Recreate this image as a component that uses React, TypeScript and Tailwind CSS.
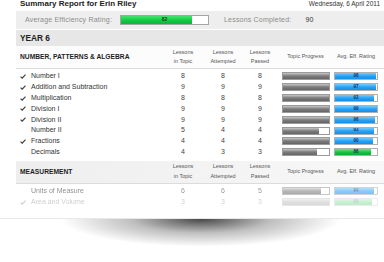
import React from "react";

type Row = {
  name: string;
  done: boolean;
  topic: number;
  attempted: number;
  passed: number;
  progress: number;
  rating: number;
  green?: boolean;
};

const algebra: Row[] = [
  { name: "Number I", done: true, topic: 8, attempted: 8, passed: 8, progress: 100, rating: 98 },
  { name: "Addition and Subtraction", done: true, topic: 9, attempted: 9, passed: 9, progress: 100, rating: 97 },
  { name: "Multiplication", done: true, topic: 8, attempted: 8, passed: 8, progress: 100, rating: 93 },
  { name: "Division I", done: true, topic: 9, attempted: 9, passed: 9, progress: 100, rating: 99 },
  { name: "Division II", done: true, topic: 9, attempted: 9, passed: 9, progress: 100, rating: 96 },
  { name: "Number II", done: false, topic: 5, attempted: 4, passed: 4, progress: 80, rating: 93 },
  { name: "Fractions", done: true, topic: 4, attempted: 4, passed: 4, progress: 100, rating: 90 },
  { name: "Decimals", done: false, topic: 4, attempted: 3, passed: 3, progress: 75, rating: 86, green: true },
];

const measurement: Row[] = [
  { name: "Units of Measure", done: false, topic: 6, attempted: 6, passed: 5, progress: 83, rating: 94 },
  { name: "Area and Volume", done: true, topic: 3, attempted: 3, passed: 3, progress: 100, rating: 89, green: true },
];

function Check() {
  return (
    <svg width="6" height="5" viewBox="0 0 6 5" className="shrink-0">
      <path d="M0.6 2.6 L2.2 4.2 L5.5 0.6" fill="none" stroke="#444" strokeWidth="1.2" />
    </svg>
  );
}

function ProgressBar({ pct }: { pct: number }) {
  return (
    <div className="w-[48px] h-[8px] border border-[#9a9a9a] bg-white overflow-hidden">
      <div
        className="h-full bg-gradient-to-b from-[#c8c8c8] via-[#7c7c7c] to-[#666666]"
        style={{ width: `${pct}%` }}
      />
    </div>
  );
}

function RatingBar({ value, green }: { value: number; green?: boolean }) {
  return (
    <div className="relative w-[44px] h-[8px] border border-[#b0b0b0] bg-white overflow-hidden">
      <div
        className={
          green
            ? "h-full bg-gradient-to-b from-[#5fe78a] via-[#12c640] to-[#0bae36]"
            : "h-full bg-gradient-to-b from-[#72caff] via-[#23a3f7] to-[#168fe8]"
        }
        style={{ width: `${value}%` }}
      />
      <span className="absolute inset-0 flex items-center justify-center text-[4.5px] font-bold leading-none text-[#16325a]">
        {value}
      </span>
    </div>
  );
}

function ColHead({ lines, w }: { lines: string[]; w: string }) {
  return (
    <div className={`${w} flex flex-col items-center justify-center text-[5.5px] leading-[9.5px] text-[#555]`}>
      {lines.map((l) => (
        <span key={l}>{l}</span>
      ))}
    </div>
  );
}

function SectionHead({ title, shaded }: { title: string; shaded?: boolean }) {
  return (
    <div
      className={
        shaded
          ? "flex h-[23px] border-b border-[#dcdcdc] bg-gradient-to-r from-[#eeeeee] to-[#f8f8f8]"
          : "flex h-[23px] border-b border-[#dcdcdc] bg-[#fcfcfc]"
      }
    >
      <div className="w-[147px] flex items-center pl-[4px] text-[6.7px] font-bold text-[#1e1e1e]">{title}</div>
      <ColHead w="w-[40px]" lines={["Lessons", "in Topic"]} />
      <ColHead w="w-[40px]" lines={["Lessons", "Attempted"]} />
      <ColHead w="w-[34px]" lines={["Lessons", "Passed"]} />
      <ColHead w="w-[57px]" lines={["Topic Progress"]} />
      <ColHead w="w-[44px]" lines={["Avg. Eff. Rating"]} />
    </div>
  );
}

function Num({ n, w }: { n: number; w: string }) {
  return (
    <div className={`${w} flex justify-center`}>
      <span className="text-[#444444]">{n}</span>
    </div>
  );
}

function DataRow({ r, className = "" }: { r: Row; className?: string }) {
  return (
    <div className={`flex items-center h-[10.85px] text-[7px] ${className}`}>
      <div className="w-[147px] flex items-center pl-[4px] text-[#333]">
        <div className="w-[6px] mr-[5px] flex">{r.done && <Check />}</div>
        <span>{r.name}</span>
      </div>
      <Num n={r.topic} w="w-[40px]" />
      <Num n={r.attempted} w="w-[40px]" />
      <Num n={r.passed} w="w-[34px]" />
      <div className="w-[57px] flex justify-center">
        <ProgressBar pct={r.progress} />
      </div>
      <div className="w-[44px] flex justify-center">
        <RatingBar value={r.rating} green={r.green} />
      </div>
    </div>
  );
}

export default function App() {
  return (
    <div className="w-[384px] h-[262px] bg-white overflow-hidden font-['Liberation_Sans',Arial,sans-serif] text-[#333]">
      {/* title line */}
      <div className="flex items-baseline justify-between h-[10px] pl-[20px] pr-[4px]">
        <span className="text-[8px] font-bold leading-none text-[#222]">Summary Report for Erin Riley</span>
        <span className="text-[6.5px] leading-none text-[#333]">Wednesday, 6 April 2011</span>
      </div>

      <div className="ml-[16px] w-[368px]">
        {/* summary band */}
        <div className="mt-[1px] h-[18px] bg-[#eeeeee] flex items-center text-[7px] tracking-[0.2px]">
          <span className="w-[104px] pl-[9px] text-[#8c8c8c]">Average Efficiency Rating:</span>
          <div className="relative w-[89px] h-[10px] border border-[#a5a5a5] bg-white">
            <div className="h-full w-[82%] bg-gradient-to-b from-[#3fe46c] via-[#14cc45] to-[#0db53b]" />
            <span className="absolute inset-0 flex items-center justify-center text-[5px] font-bold tracking-normal text-[#1d3a1d]">
              82
            </span>
          </div>
          <span className="ml-[15px] text-[#8c8c8c]">Lessons Completed:</span>
          <span className="ml-[14px] text-[#333]">90</span>
        </div>

        {/* year band */}
        <div className="mt-[1px] h-[16px] bg-[#e7e7e7] flex items-center pl-[4px] text-[8.3px] font-bold text-[#222]">
          YEAR 6
        </div>

        <SectionHead title="NUMBER, PATTERNS & ALGEBRA" />
        <div className="pt-[2px]">
          {algebra.map((r) => (
            <DataRow key={r.name} r={r} />
          ))}
        </div>

        <div className="mt-[3px]">
          <SectionHead title="MEASUREMENT" shaded />
        </div>
        <div className="pt-[2px] h-[34px]">
          <DataRow r={measurement[0]} className="opacity-55" />
          <DataRow r={measurement[1]} className="opacity-25" />
        </div>
      </div>

      <div className="border-t border-[#e8e8e8]" />
      {/* curled shadow under the panel */}
      <div className="ml-[60px] w-[282px] h-[28px] bg-[radial-gradient(ellipse_at_top,rgba(0,0,0,0.72),rgba(0,0,0,0.25)_35%,rgba(0,0,0,0)_70%)]" />
    </div>
  );
}
